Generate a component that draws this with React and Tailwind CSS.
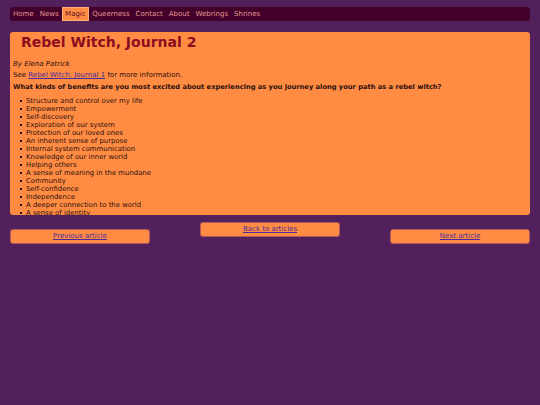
import React from 'react';

const NAV = ['Home', 'News', 'Magic', 'Queerness', 'Contact', 'About', 'Webrings', 'Shrines'];

const BENEFITS = [
    'Structure and control over my life',
    'Empowerment',
    'Self-discovery',
    'Exploration of our system',
    'Protection of our loved ones',
    'An inherent sense of purpose',
    'Internal system communication',
    'Knowledge of our inner world',
    'Helping others',
    'A sense of meaning in the mundane',
    'Community',
    'Self-confidence',
    'Independence',
    'A deeper connection to the world',
    'A sense of identity',
];

const font = { fontFamily: '"DejaVu Sans", Verdana, sans-serif' };

const App = () => {
    return (
        <div className="min-h-[405px] w-full bg-[#52215b] px-[10px] pt-[7px]" style={font}>
            <nav className="h-[14px] rounded-[3px] bg-[#42002a] flex items-stretch">
                {NAV.map((item) => (
                    <a
                        key={item}
                        href="#"
                        className={
                            item === 'Magic'
                                ? 'px-[2.5px] flex items-center text-[7px] leading-none text-[#5a0a2a] bg-[#ff8c42] border border-[#ffb07a]'
                                : 'px-[3px] flex items-center text-[7px] leading-none text-[#e39a8e]'
                        }
                    >
                        {item}
                    </a>
                ))}
            </nav>

            <main className="mt-[11px] h-[183px] overflow-hidden rounded-[3px] bg-[#ff8c42] pl-[3px] pr-[6px] text-[#2b0f0f] text-[7px] leading-[8px]">
                <h1 className="pl-[8px] pt-[2px] text-[14px] leading-[16px] font-bold text-[#8b0d1f]">
                    Rebel Witch, Journal 2
                </h1>
                <p className="mt-[10px] italic">By Elena Patrick</p>
                <p className="mt-[3px]">
                    See <a href="#" className="underline text-[#4a2a9c]">Rebel Witch, Journal 1</a> for more information.
                </p>
                <p className="mt-[4px] font-bold text-[6.7px]">
                    What kinds of benefits are you most excited about experiencing as you journey along your path as a rebel witch?
                </p>
                <ul className="mt-[6px] pl-[7px]">
                    {BENEFITS.map((b) => (
                        <li key={b} className="flex items-center gap-[4px]">
                            <span className="w-[2px] h-[2px] bg-[#2b0f0f] shrink-0"></span>
                            <span className="text-[6.9px]">{b}</span>
                        </li>
                    ))}
                </ul>
            </main>

            <div className="mt-[7px] flex justify-between items-start">
                <a href="#" className="mt-[7px] w-[140px] h-[15px] rounded-[3px] bg-[#ff8c42] border border-[#b05a5a] flex items-center justify-center text-[7px] underline text-[#4a2a9c]">
                    Previous article
                </a>
                <a href="#" className="w-[140px] h-[15px] rounded-[3px] bg-[#ff8c42] border border-[#b05a5a] flex items-center justify-center text-[7px] underline text-[#4a2a9c]">
                    Back to articles
                </a>
                <a href="#" className="mt-[7px] w-[140px] h-[15px] rounded-[3px] bg-[#ff8c42] border border-[#b05a5a] flex items-center justify-center text-[7px] underline text-[#4a2a9c]">
                    Next article
                </a>
            </div>
        </div>
    );
};

export default App;
